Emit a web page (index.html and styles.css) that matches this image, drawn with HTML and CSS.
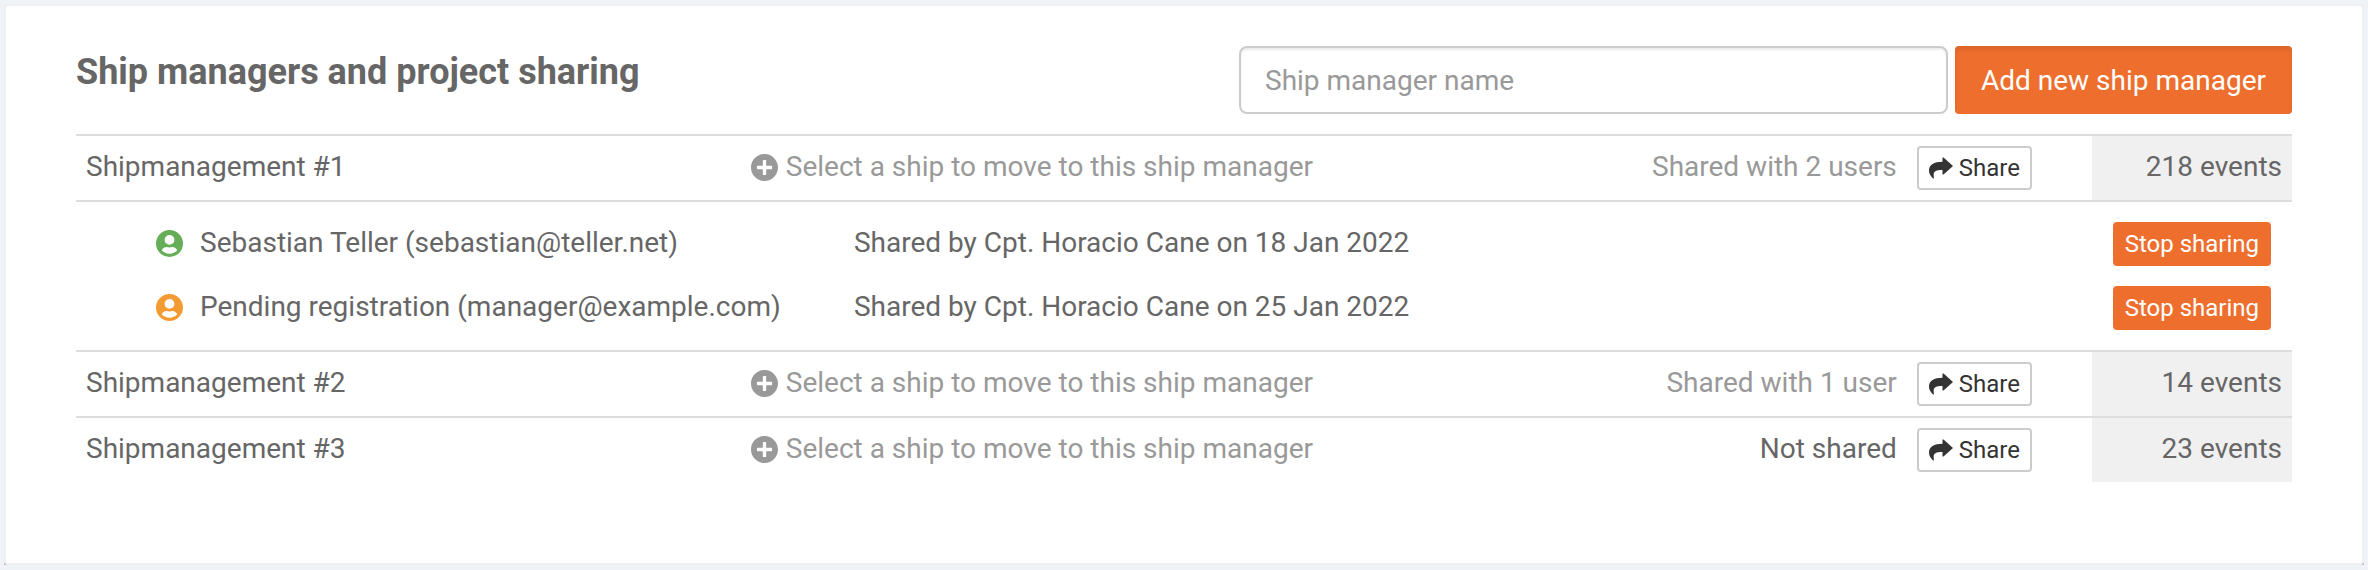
FILE: index.html
```html
<!DOCTYPE html>
<html lang="en">
<head>
    <meta charset="UTF-8">
    <meta name="viewport" content="width=device-width, initial-scale=1.0">
    <title>Ship managers</title>
    <link rel="stylesheet" href="styles.css">
</head>
<body>
    <!-- Icons used in the table -->
    <svg class="sprite" aria-hidden="true">
        <symbol id="icon-plus" viewBox="0 0 512 512">
            <path d="M256 0C115 0 0 115 0 256s115 256 256 256 256-115 256-256S397 0 256 0zm144 276c0 7-5 12-12 12h-92c-4 0-8 4-8 8v92c0 7-5 12-12 12h-40c-7 0-12-5-12-12v-92c0-4-4-8-8-8h-92c-7 0-12-5-12-12v-40c0-7 5-12 12-12h92c4 0 8-4 8-8v-92c0-7 5-12 12-12h40c7 0 12 5 12 12v92c0 4 4 8 8 8h92c7 0 12 5 12 12v40z"/>
        </symbol>
        <symbol id="icon-user" viewBox="0 0 27 27">
            <path fill-rule="evenodd" d="M13.5 0a13.5 13.5 0 1 0 0 27 13.5 13.5 0 0 0 0-27zm0 5a4.7 4.7 0 0 1 0 9.800 4.700 4.700 0 0 1 0-9.800zM5.800 20.500c.7-2.300 2.500-3.500 4.900-3.500.9.300 1.800.5 2.800.5s1.900-.2 2.800-.5c2.400 0 4.200 1.200 4.900 3.500-1.900 2-4.600 3.200-7.700 3.200s-5.800-1.200-7.700-3.200z"/>
        </symbol>
        <symbol id="icon-share" viewBox="0 0 24 22">
            <path d="M14.500.5L24 9l-9.500 8.500h-1V13C8 12.800 5 14 4.700 17c-.1 1.600 0 2.800.3 4.200l-1 .3C1.500 19 0 16.500 0 13.500 0 8 5 4.800 13.500 4.800V.5z"/>
        </symbol>
    </svg>

    <div class="card">
        <div class="card-header">
            <h1>Ship managers and project sharing</h1>
            <form class="add-form">
                <input type="text" aria-label="Ship manager name" placeholder="Ship manager name">
                <button type="button" class="btn-add">Add new ship manager</button>
            </form>
        </div>

        <table class="managers">
            <tr>
                <td class="name">Shipmanagement #1</td>
                <td class="move"><a href="#"><svg class="icon"><use href="#icon-plus"/></svg>Select a ship to move to this ship manager</a></td>
                <td>
                    <div class="sharing">
                        <a href="#">Shared with 2 users</a>
                        <button type="button" class="btn-share"><svg><use href="#icon-share"/></svg>Share</button>
                    </div>
                </td>
                <td class="events">218 events</td>
            </tr>
            <tr>
                <td colspan="4" class="details">
                    <ul class="users">
                        <li>
                            <span class="user"><svg class="icon active"><use href="#icon-user"/></svg>Sebastian Teller (sebastian@teller.net)</span>
                            <span class="shared-by">Shared by Cpt. Horacio Cane on 18 Jan 2022</span>
                            <button type="button" class="btn-stop">Stop sharing</button>
                        </li>
                        <li>
                            <span class="user"><svg class="icon pending"><use href="#icon-user"/></svg>Pending registration (manager@example.com)</span>
                            <span class="shared-by">Shared by Cpt. Horacio Cane on 25 Jan 2022</span>
                            <button type="button" class="btn-stop">Stop sharing</button>
                        </li>
                    </ul>
                </td>
            </tr>
            <tr>
                <td class="name">Shipmanagement #2</td>
                <td class="move"><a href="#"><svg class="icon"><use href="#icon-plus"/></svg>Select a ship to move to this ship manager</a></td>
                <td>
                    <div class="sharing">
                        <a href="#">Shared with 1 user</a>
                        <button type="button" class="btn-share"><svg><use href="#icon-share"/></svg>Share</button>
                    </div>
                </td>
                <td class="events">14 events</td>
            </tr>
            <tr>
                <td class="name">Shipmanagement #3</td>
                <td class="move"><a href="#"><svg class="icon"><use href="#icon-plus"/></svg>Select a ship to move to this ship manager</a></td>
                <td>
                    <div class="sharing">
                        <span>Not shared</span>
                        <button type="button" class="btn-share"><svg><use href="#icon-share"/></svg>Share</button>
                    </div>
                </td>
                <td class="events">23 events</td>
            </tr>
        </table>
    </div>
</body>
</html>
```
FILE: styles.css
```css
* {
    box-sizing: border-box;
}
body {
    margin: 4px;
    font-family: Roboto, Arial, sans-serif;
    font-size: 28px;
    line-height: 42px;
    color: #666;
    background-color: #eff3f8;
}
a {
    color: #999;
    text-decoration: none;
}
button,
input {
    font-family: inherit;
    font-size: 28px;
}
button {
    cursor: pointer;
}
.sprite {
    display: none;
}
.card {
    padding: 40px 70px 81px;
    background: #fff;
    border: 2px solid #f0f0f0;
    border-radius: 4px;
    box-shadow: 0 1px 0 #aaabad, 0 2px 0 #bfc1c4, 0 3px 0 #dde0e4;
}
.card-header {
    display: flex;
    justify-content: space-between;
    align-items: flex-start;
    margin-bottom: 20px;
}
h1 {
    margin: 0;
    font-size: 36px;
    line-height: 52px;
}
.add-form {
    display: flex;
    flex: 0 0 auto;
    width: 1053px;
    max-width: 60%;
    gap: 7px;
}
.add-form input {
    flex: 1;
    min-width: 0;
    height: 68px;
    padding: 0 24px;
    color: #555;
    border: 2px solid #ccc;
    border-radius: 8px;
    box-shadow: inset 0 2px 2px rgba(0, 0, 0, 0.075);
}
.add-form input::placeholder {
    color: #999;
}
.btn-add {
    padding: 0 26px;
    color: #fff;
    background: #ee6e2d;
    border: none;
    border-radius: 4px;
    box-shadow: inset 0 4px 4px rgba(0, 0, 0, 0.08);
}
.managers {
    width: 100%;
    table-layout: fixed;
    border-collapse: collapse;
}
.managers td {
    padding: 10px;
    vertical-align: top;
    border-top: 2px solid #ddd;
}
.managers .name,
.managers .move {
    width: 30%;
}
.managers .events {
    width: 200px;
    text-align: right;
    background: #f0f0f0;
}
.icon {
    width: 27px;
    height: 27px;
    fill: currentColor;
}
.move a {
    display: flex;
    align-items: center;
    gap: 8px;
}
.sharing {
    display: flex;
    justify-content: flex-end;
    gap: 20px;
    padding-right: 50px;
}
.btn-share {
    display: flex;
    align-items: center;
    gap: 6px;
    height: 44px;
    padding: 0 10px;
    font-size: 24px;
    color: #333;
    background: #fff;
    border: 2px solid #ccc;
    border-radius: 4px;
}
.btn-share svg {
    width: 24px;
    height: 22px;
    fill: currentColor;
}
.managers .details {
    padding: 20px 21px 20px 80px;
}
.users {
    display: flex;
    flex-direction: column;
    gap: 20px;
    margin: 0;
    padding: 0;
    list-style: none;
}
.users li {
    display: flex;
    align-items: flex-start;
}
.user {
    display: flex;
    align-items: center;
    gap: 17px;
    width: 33%;
}
.active {
    color: #66ad58;
}
.pending {
    color: #f39b33;
}
.btn-stop {
    height: 44px;
    margin-left: auto;
    padding: 0 12px;
    font-size: 24px;
    color: #fff;
    background: #ee6e2d;
    border: none;
    border-radius: 4px;
}
```
